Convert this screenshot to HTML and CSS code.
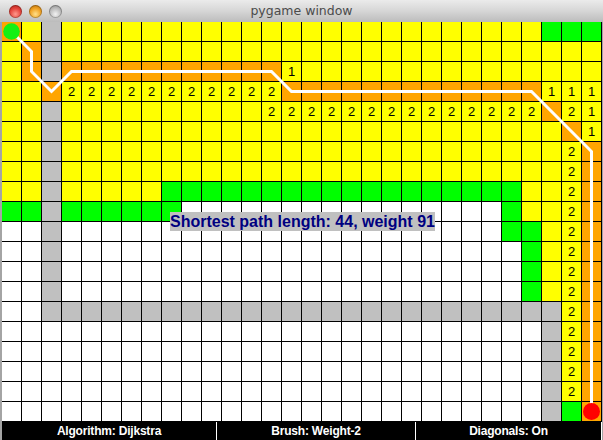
FILE: index.html
```html
<!DOCTYPE html>
<html lang="en">
<head>
<meta charset="utf-8">
<title>pygame window</title>
<link rel="stylesheet" href="styles.css">
</head>
<body>
<div class="window">
  <header class="titlebar">
    <div class="lights"><span class="light red"></span><span class="light amber"></span><span class="light grey"></span></div>
    <span class="title">pygame window</span>
    <span></span>
  </header>
  <main class="content">
    <div class="board">
<i class="o"></i><i class="y"></i><i class="k"></i><i class="y"></i><i class="y"></i><i class="y"></i><i class="y"></i><i class="y"></i><i class="y"></i><i class="y"></i><i class="y"></i><i class="y"></i><i class="y"></i><i class="y"></i><i class="y"></i><i class="y"></i><i class="y"></i><i class="y"></i><i class="y"></i><i class="y"></i><i class="y"></i><i class="y"></i><i class="y"></i><i class="y"></i><i class="y"></i><i class="y"></i><i class="y"></i><i class="n"></i><i class="n"></i><i class="n"></i>
<i class="y"></i><i class="o"></i><i class="k"></i><i class="y"></i><i class="y"></i><i class="y"></i><i class="y"></i><i class="y"></i><i class="y"></i><i class="y"></i><i class="y"></i><i class="y"></i><i class="y"></i><i class="y"></i><i class="y"></i><i class="y"></i><i class="y"></i><i class="y"></i><i class="y"></i><i class="y"></i><i class="y"></i><i class="y"></i><i class="y"></i><i class="y"></i><i class="y"></i><i class="y"></i><i class="y"></i><i class="y"></i><i class="y"></i><i class="y"></i>
<i class="y"></i><i class="o"></i><i class="k"></i><i class="o"></i><i class="o"></i><i class="o"></i><i class="o"></i><i class="o"></i><i class="o"></i><i class="o"></i><i class="o"></i><i class="o"></i><i class="o"></i><i class="o"></i><i class="y">1</i><i class="y"></i><i class="y"></i><i class="y"></i><i class="y"></i><i class="y"></i><i class="y"></i><i class="y"></i><i class="y"></i><i class="y"></i><i class="y"></i><i class="y"></i><i class="y"></i><i class="y"></i><i class="y"></i><i class="y"></i>
<i class="y"></i><i class="y"></i><i class="o"></i><i class="y">2</i><i class="y">2</i><i class="y">2</i><i class="y">2</i><i class="y">2</i><i class="y">2</i><i class="y">2</i><i class="y">2</i><i class="y">2</i><i class="y">2</i><i class="y">2</i><i class="o"></i><i class="o"></i><i class="o"></i><i class="o"></i><i class="o"></i><i class="o"></i><i class="o"></i><i class="o"></i><i class="o"></i><i class="o"></i><i class="o"></i><i class="o"></i><i class="o"></i><i class="y">1</i><i class="y">1</i><i class="y">1</i>
<i class="y"></i><i class="y"></i><i class="k"></i><i class="y"></i><i class="y"></i><i class="y"></i><i class="y"></i><i class="y"></i><i class="y"></i><i class="y"></i><i class="y"></i><i class="y"></i><i class="y"></i><i class="y">2</i><i class="y">2</i><i class="y">2</i><i class="y">2</i><i class="y">2</i><i class="y">2</i><i class="y">2</i><i class="y">2</i><i class="y">2</i><i class="y">2</i><i class="y">2</i><i class="y">2</i><i class="y">2</i><i class="y">2</i><i class="o"></i><i class="y">2</i><i class="y">1</i>
<i class="y"></i><i class="y"></i><i class="k"></i><i class="y"></i><i class="y"></i><i class="y"></i><i class="y"></i><i class="y"></i><i class="y"></i><i class="y"></i><i class="y"></i><i class="y"></i><i class="y"></i><i class="y"></i><i class="y"></i><i class="y"></i><i class="y"></i><i class="y"></i><i class="y"></i><i class="y"></i><i class="y"></i><i class="y"></i><i class="y"></i><i class="y"></i><i class="y"></i><i class="y"></i><i class="y"></i><i class="y"></i><i class="o"></i><i class="y">1</i>
<i class="y"></i><i class="y"></i><i class="k"></i><i class="y"></i><i class="y"></i><i class="y"></i><i class="y"></i><i class="y"></i><i class="y"></i><i class="y"></i><i class="y"></i><i class="y"></i><i class="y"></i><i class="y"></i><i class="y"></i><i class="y"></i><i class="y"></i><i class="y"></i><i class="y"></i><i class="y"></i><i class="y"></i><i class="y"></i><i class="y"></i><i class="y"></i><i class="y"></i><i class="y"></i><i class="y"></i><i class="y"></i><i class="y">2</i><i class="o"></i>
<i class="y"></i><i class="y"></i><i class="k"></i><i class="y"></i><i class="y"></i><i class="y"></i><i class="y"></i><i class="y"></i><i class="y"></i><i class="y"></i><i class="y"></i><i class="y"></i><i class="y"></i><i class="y"></i><i class="y"></i><i class="y"></i><i class="y"></i><i class="y"></i><i class="y"></i><i class="y"></i><i class="y"></i><i class="y"></i><i class="y"></i><i class="y"></i><i class="y"></i><i class="y"></i><i class="y"></i><i class="y"></i><i class="y">2</i><i class="o"></i>
<i class="y"></i><i class="y"></i><i class="k"></i><i class="y"></i><i class="y"></i><i class="y"></i><i class="y"></i><i class="y"></i><i class="n"></i><i class="n"></i><i class="n"></i><i class="n"></i><i class="n"></i><i class="n"></i><i class="n"></i><i class="n"></i><i class="n"></i><i class="n"></i><i class="n"></i><i class="n"></i><i class="n"></i><i class="n"></i><i class="n"></i><i class="n"></i><i class="n"></i><i class="n"></i><i class="y"></i><i class="y"></i><i class="y">2</i><i class="o"></i>
<i class="n"></i><i class="n"></i><i class="k"></i><i class="n"></i><i class="n"></i><i class="n"></i><i class="n"></i><i class="n"></i><i class="n"></i><i></i><i></i><i></i><i></i><i></i><i></i><i></i><i></i><i></i><i></i><i></i><i></i><i></i><i></i><i></i><i></i><i class="n"></i><i class="y"></i><i class="y"></i><i class="y">2</i><i class="o"></i>
<i></i><i></i><i class="k"></i><i></i><i></i><i></i><i></i><i></i><i></i><i></i><i></i><i></i><i></i><i></i><i></i><i></i><i></i><i></i><i></i><i></i><i></i><i></i><i></i><i></i><i></i><i class="n"></i><i class="n"></i><i class="y"></i><i class="y">2</i><i class="o"></i>
<i></i><i></i><i class="k"></i><i></i><i></i><i></i><i></i><i></i><i></i><i></i><i></i><i></i><i></i><i></i><i></i><i></i><i></i><i></i><i></i><i></i><i></i><i></i><i></i><i></i><i></i><i></i><i class="n"></i><i class="y"></i><i class="y">2</i><i class="o"></i>
<i></i><i></i><i class="k"></i><i></i><i></i><i></i><i></i><i></i><i></i><i></i><i></i><i></i><i></i><i></i><i></i><i></i><i></i><i></i><i></i><i></i><i></i><i></i><i></i><i></i><i></i><i></i><i class="n"></i><i class="y"></i><i class="y">2</i><i class="o"></i>
<i></i><i></i><i class="k"></i><i></i><i></i><i></i><i></i><i></i><i></i><i></i><i></i><i></i><i></i><i></i><i></i><i></i><i></i><i></i><i></i><i></i><i></i><i></i><i></i><i></i><i></i><i></i><i class="n"></i><i class="y"></i><i class="y">2</i><i class="o"></i>
<i></i><i></i><i class="k"></i><i class="k"></i><i class="k"></i><i class="k"></i><i class="k"></i><i class="k"></i><i class="k"></i><i class="k"></i><i class="k"></i><i class="k"></i><i class="k"></i><i class="k"></i><i class="k"></i><i class="k"></i><i class="k"></i><i class="k"></i><i class="k"></i><i class="k"></i><i class="k"></i><i class="k"></i><i class="k"></i><i class="k"></i><i class="k"></i><i class="k"></i><i class="k"></i><i class="k"></i><i class="y">2</i><i class="o"></i>
<i></i><i></i><i></i><i></i><i></i><i></i><i></i><i></i><i></i><i></i><i></i><i></i><i></i><i></i><i></i><i></i><i></i><i></i><i></i><i></i><i></i><i></i><i></i><i></i><i></i><i></i><i></i><i class="k"></i><i class="y">2</i><i class="o"></i>
<i></i><i></i><i></i><i></i><i></i><i></i><i></i><i></i><i></i><i></i><i></i><i></i><i></i><i></i><i></i><i></i><i></i><i></i><i></i><i></i><i></i><i></i><i></i><i></i><i></i><i></i><i></i><i class="k"></i><i class="y">2</i><i class="o"></i>
<i></i><i></i><i></i><i></i><i></i><i></i><i></i><i></i><i></i><i></i><i></i><i></i><i></i><i></i><i></i><i></i><i></i><i></i><i></i><i></i><i></i><i></i><i></i><i></i><i></i><i></i><i></i><i class="k"></i><i class="y">2</i><i class="o"></i>
<i></i><i></i><i></i><i></i><i></i><i></i><i></i><i></i><i></i><i></i><i></i><i></i><i></i><i></i><i></i><i></i><i></i><i></i><i></i><i></i><i></i><i></i><i></i><i></i><i></i><i></i><i></i><i class="k"></i><i class="y">2</i><i class="o"></i>
<i></i><i></i><i></i><i></i><i></i><i></i><i></i><i></i><i></i><i></i><i></i><i></i><i></i><i></i><i></i><i></i><i></i><i></i><i></i><i></i><i></i><i></i><i></i><i></i><i></i><i></i><i></i><i class="k"></i><i class="n"></i><i class="o"></i>
      <svg class="route" width="600" height="400" viewBox="0 0 600 400">
        <polyline points="9.5,9.5 29.5,29.5 29.5,49.5 49.5,69.5 69.5,49.5 269.5,49.5 289.5,69.5 529.5,69.5 589.5,129.5 589.5,389.5" fill="none" stroke="#fff" stroke-width="3"/>
        <circle cx="9.5" cy="9.5" r="8.3" fill="#14f014"/>
        <circle cx="589.5" cy="389.5" r="8.5" fill="#f00"/>
      </svg>
      <div class="label">Shortest path length: 44, weight 91</div>
    </div>
    <footer class="status">
      <div class="sec">Algorithm: Dijkstra</div>
      <div class="sec">Brush: Weight-2</div>
      <div class="sec">Diagonals: On</div>
    </footer>
  </main>
</div>
</body>
</html>
```

FILE: styles.css
```css
* { box-sizing: border-box; }
html, body { margin: 0; padding: 0; }
body { width: 603px; height: 440px; overflow: hidden; background: #a4a4a4; }

.window { width: 603px; height: 440px; display: flex; flex-direction: column; }

.titlebar {
  height: 22px;
  display: grid;
  grid-template-columns: 1fr auto 1fr;
  align-items: center;
  background: linear-gradient(#ebebeb, #d6d6d6 50%, #bcbcbc);
}
.lights { display: flex; gap: 7px; padding-left: 9px; padding-top: 1px; }
.light { width: 13px; height: 13px; border-radius: 50%; box-shadow: inset 0 0 0 1px rgba(0,0,0,0.25); }
.red { background: radial-gradient(circle at 50% 70%, #ff9a8c, #e5443c 50%, #b3231c 90%); }
.amber { background: radial-gradient(circle at 50% 70%, #ffe08a, #f0a224 50%, #b8700e 90%); }
.grey { background: radial-gradient(circle at 50% 70%, #f2f2f2, #bdbdbd 50%, #8f8f8f 90%); }
.title { font: 12.5px/22px "DejaVu Sans", sans-serif; color: #4b4b4b; }

.content { display: flex; flex-direction: column; padding: 0 1px 0 2px; }

.board {
  position: relative;
  display: grid;
  grid-template-columns: repeat(30, 20px);
  grid-template-rows: repeat(20, 20px);
}
.board i {
  font-style: normal;
  background: #fff;
  border-right: 1px solid #000;
  border-bottom: 1px solid #000;
  font: 13px/19px "Liberation Sans", Arial, sans-serif;
  text-align: center;
  color: #000;
}
.board .y { background: #ffff00; }
.board .o { background: #ffa500; }
.board .k { background: #c0c0c0; }
.board .n { background: #00ff00; }

.route { position: absolute; left: 0; top: 0; }

.label {
  position: absolute;
  left: 168px;
  top: 190px;
  font: bold 16px/19px "Liberation Sans", Arial, sans-serif;
  color: #000080;
  background: #c0c0c0;
  white-space: nowrap;
}

.status {
  display: grid;
  grid-template-columns: 215px 199px 186px;
  height: 18px;
  background: #000;
}
.sec {
  border-right: 1px solid #fff;
  color: #fff;
  font: bold 12px/18px "Liberation Sans", Arial, sans-serif;
  letter-spacing: -0.2px;
  text-align: center;
}
```
